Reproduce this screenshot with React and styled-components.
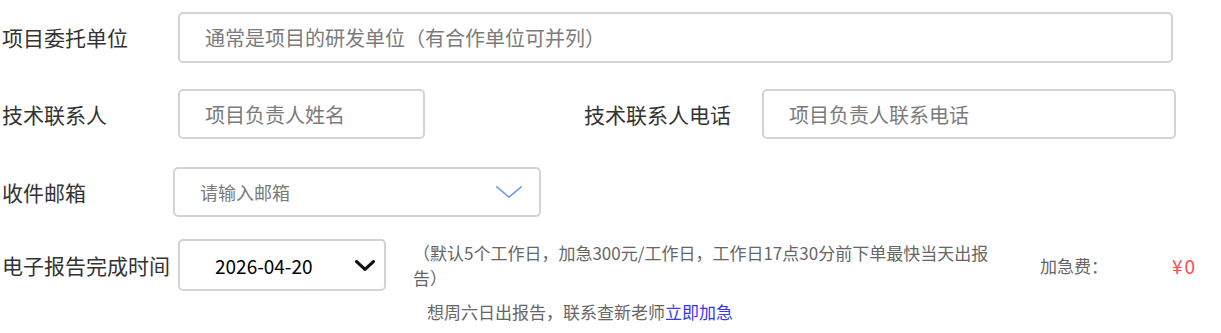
import React from 'react'
import styled, { createGlobalStyle } from 'styled-components'

const GlobalStyle = createGlobalStyle`
  body {
    margin: 0;
    background: #fff;
    font-family: "Noto Sans CJK SC", "Noto Sans", sans-serif;
  }
`

function Chevron({ color, width, height, stroke }) {
  return (
    <svg width={width} height={height} viewBox={`0 0 ${width} ${height}`} fill="none">
      <polyline
        points={`${stroke / 2},${stroke / 2} ${width / 2},${height - stroke / 2} ${width - stroke / 2},${stroke / 2}`}
        stroke={color}
        strokeWidth={stroke}
        strokeLinecap="round"
        strokeLinejoin="round"
      />
    </svg>
  )
}

export default function App() {
  return (
    <>
      <GlobalStyle />
      <Form>
        <Row $top={12}>
          <Label $width={176}>项目委托单位</Label>
          <TextInput $width={995} $height={51} placeholder="通常是项目的研发单位（有合作单位可并列）" />
        </Row>

        <Row $top={26}>
          <Label $width={176}>技术联系人</Label>
          <TextInput $width={247} placeholder="项目负责人姓名" />
          <Label $width={178} $offset={159}>技术联系人电话</Label>
          <TextInput $width={414} placeholder="项目负责人联系电话" />
        </Row>

        <Row $top={28}>
          <Label $width={171}>收件邮箱</Label>
          <SelectBox $width={368}>
            <Placeholder>请输入邮箱</Placeholder>
            <Chevron color="#6f9fe4" width={26} height={12} stroke={1.6} />
          </SelectBox>
        </Row>

        <Row $top={22}>
          <Label $width={176}>电子报告完成时间</Label>
          <DateSelect>
            <DateValue>2026-04-20</DateValue>
            <Chevron color="#111" width={20} height={11} stroke={3.2} />
          </DateSelect>
          <Note>（默认5个工作日，加急300元/工作日，工作日17点30分前下单最快当天出报告）</Note>
          <FeeLabel>加急费：</FeeLabel>
          <FeeValue>¥0</FeeValue>
        </Row>

        <Hint>
          想周六日出报告，联系查新老师<HintLink href="#">立即加急</HintLink>
        </Hint>
      </Form>
    </>
  )
}

const Form = styled.div`
  display: flex;
  flex-direction: column;
  padding-left: 2px;
  width: 1221px;
  box-sizing: border-box;
`

const Row = styled.div`
  display: flex;
  align-items: center;
  margin-top: ${p => p.$top}px;
`

const Label = styled.div`
  flex: none;
  width: ${p => p.$width}px;
  margin-left: ${p => p.$offset || 0}px;
  font-size: 21px;
  color: #333;
  white-space: nowrap;
  line-height: 1;
`

const TextInput = styled.input`
  flex: none;
  width: ${p => p.$width}px;
  height: ${p => p.$height || 50}px;
  box-sizing: border-box;
  border: 2px solid #d3d3d3;
  border-radius: 5px;
  padding: 0 0 0 25px;
  font-family: inherit;
  font-size: 20px;
  color: #333;
  outline: none;
  background: #fff;

  &::placeholder {
    color: #7b7b7b;
  }
`

const SelectBox = styled.div`
  flex: none;
  width: ${p => p.$width}px;
  height: 50px;
  box-sizing: border-box;
  border: 2px solid #d3d3d3;
  border-radius: 5px;
  padding: 0 17px 0 25px;
  display: flex;
  align-items: center;
  justify-content: space-between;
`

const Placeholder = styled.span`
  font-size: 18px;
  color: #7b7b7b;
`

const DateSelect = styled.div`
  flex: none;
  width: 208px;
  height: 52px;
  box-sizing: border-box;
  border: 2px solid #d3d3d3;
  border-radius: 5px;
  padding: 0 9px 0 35px;
  display: flex;
  align-items: center;
  justify-content: space-between;
`

const DateValue = styled.span`
  font-size: 19px;
  color: #000;
`

const Note = styled.div`
  flex: none;
  width: 590px;
  margin-left: 27px;
  font-size: 17px;
  line-height: 25px;
  color: #666;
`

const FeeLabel = styled.div`
  flex: none;
  width: 132px;
  margin-left: 37px;
  font-size: 17px;
  color: #666;
`

const FeeValue = styled.div`
  font-size: 19px;
  letter-spacing: 2px;
  color: #ff4b4b;
`

const Hint = styled.div`
  margin: 8px 0 0 425px;
  font-size: 17px;
  line-height: 25px;
  color: #666;
`

const HintLink = styled.a`
  color: #3a36f5;
  text-decoration: none;
`
